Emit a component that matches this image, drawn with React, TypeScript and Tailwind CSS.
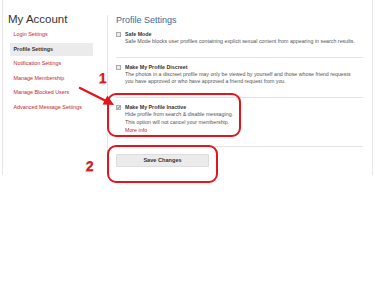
import React from "react";

function Checkbox({ checked }: { checked?: boolean }) {
  return (
    <div className="w-[5px] h-[5px] mt-[1px] shrink-0 border border-[#ababab] bg-[#ececec] relative">
      {checked && (
        <svg viewBox="0 0 5 5" className="absolute -left-[1px] -top-[1px] w-[5px] h-[5px]">
          <path d="M1.1 2.6 L2.1 3.6 L4 1.2" stroke="#555" strokeWidth="0.8" fill="none" />
        </svg>
      )}
    </div>
  );
}

function Option({
  checked,
  title,
  lines,
  more,
  pt,
  pb,
}: {
  checked?: boolean;
  title: string;
  lines: string[];
  more?: boolean;
  pt: string;
  pb: string;
}) {
  return (
    <div className={`border-b border-[#e4e4e4] ${pt} ${pb}`}>
      <div className="flex gap-[4px]">
        <Checkbox checked={checked} />
        <div className="text-[5.3px] leading-[7.3px] whitespace-nowrap">
          <div className="font-bold text-[#333]">{title}</div>
          {lines.map((l) => (
            <div key={l} className="text-[#555]">
              {l}
            </div>
          ))}
          {more && <div className="mt-[1.4px] text-[#c4262e]">More info</div>}
        </div>
      </div>
    </div>
  );
}

export default function App() {
  const links = [
    "Login Settings",
    "Profile Settings",
    "Notification Settings",
    "Manage Membership",
    "Manage Blocked Users",
    "Advanced Message Settings",
  ];
  return (
    <div className="relative w-[375px] h-[281px] bg-white overflow-hidden font-['Liberation_Sans',Arial,sans-serif]">
      <div className="ml-[2px] w-[371px] h-[175px] border-x border-[#e6e6e6] flex">
        <aside className="w-[104px] shrink-0 pt-[12px]">
          <div className="pl-[5px] text-[11.5px] leading-[14px] text-[#333]">My Account</div>
          <ul className="mt-[2px] ml-[7px] w-[83px] flex flex-col gap-[1.5px]">
            {links.map((l) => {
              const active = l === "Profile Settings";
              return (
                <li
                  key={l}
                  className={`h-[13px] flex items-center pl-[3.5px] text-[5.4px] whitespace-nowrap ${
                    active ? "bg-[#ebebeb] font-bold text-[#333]" : "text-[#c4262e]"
                  }`}
                >
                  {l}
                </li>
              );
            })}
          </ul>
        </aside>
        <main className="flex-1 mt-[15px] border-l border-[#e6e6e6] pl-[8px] pr-[9px]">
          <h2 className="text-[9px] leading-[11px] text-[#41689c]">Profile Settings</h2>
          <Option
            pt="pt-[4.8px]"
            pb="pb-[11.6px]"
            title="Safe Mode"
            lines={[
              "Safe Mode blocks user profiles containing explicit sexual content from appearing in search results.",
            ]}
          />
          <Option
            pt="pt-[5.8px]"
            pb="pb-[11.3px]"
            title="Make My Profile Discreet"
            lines={[
              "The photos in a discreet profile may only be viewed by yourself and those whose friend requests",
              "you have approved or who have approved a friend request from you.",
            ]}
          />
          <Option
            checked
            pt="pt-[6px]"
            pb="pb-[11.4px]"
            title="Make My Profile Inactive"
            lines={["Hide profile from search & disable messaging.", "This option will not cancel your membership."]}
            more
          />
          <div className="pt-[7px]">
            <button className="w-[93px] h-[13px] bg-[#ebebeb] border border-[#dddddd] rounded-[1px] text-[5.6px] font-bold text-[#333] flex items-center justify-center">
              Save Changes
            </button>
          </div>
        </main>
      </div>

      {/* annotations */}
      <div className="absolute left-[107px] top-[93px] w-[134px] h-[44px] border-2 border-[#e3141b] rounded-[9px]" />
      <div className="absolute left-[107px] top-[145px] w-[111px] h-[38px] border-2 border-[#e3141b] rounded-[9px]" />
      <svg className="absolute left-0 top-0 w-[375px] h-[281px] pointer-events-none" viewBox="0 0 375 281">
        <path d="M80 88 L106 101" stroke="#e3141b" strokeWidth="2.4" strokeLinecap="round" />
        <polygon points="114,105 102.6,104.6 107.4,95.4" fill="#e3141b" />
      </svg>
      <div className="absolute left-[99px] top-[71px] text-[14px] leading-[14px] font-bold text-[#e3141b] [text-shadow:-1px_1px_0_#b5b5b5]">
        1
      </div>
      <div className="absolute left-[86px] top-[158.5px] text-[14px] leading-[14px] font-bold text-[#e3141b] [text-shadow:-1px_1px_0_#b5b5b5]">
        2
      </div>
    </div>
  );
}
